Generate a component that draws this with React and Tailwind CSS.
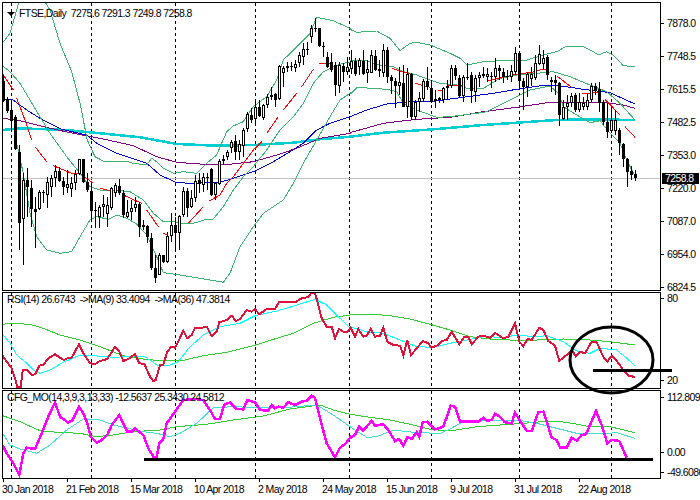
const FONT = { fontFamily: '"Liberation Sans", Arial, sans-serif' };

// All series are read off the reference at 3x scale: [x, y, x, y, ...]; R marks the right half (x + 1050).
const pair = (a, b = []) => {
  const out = [];
  for (let i = 0; i < a.length; i += 2) out.push([a[i], a[i + 1]]);
  for (let i = 0; i < b.length; i += 2) out.push([b[i] + 1050, b[i + 1]]);
  return out;
};
const main = (a, b) => pair(a, b).map(([x, y]) => `${(x / 3).toFixed(1)},${(y / 3).toFixed(1)}`).join(' ');
const sub = (a, b) => pair(a, b).map(([x, y]) => `${(x / 3).toFixed(1)},${(285 + y / 3).toFixed(1)}`).join(' ');

// top, bottom, high, low, white?
const CANDLES = [
  [243,303,225,305,0],[298,332,290,340,0],[330,362,305,395,0],[350,447,345,450,0],[457,670,435,750,0],[540,658,520,795,1],[540,560,505,650,0],[565,628,540,680,0],[628,635,590,745,0],[577,628,570,630,1],
  [577,580,570,610,1],[545,585,530,625,1],[535,562,525,590,1],[512,535,495,560,1],[513,542,500,545,0],[542,562,530,585,0],[553,563,510,580,1],[550,567,530,592,1],[522,550,510,570,1],[478,522,478,525,1],
  [478,545,478,548,0],[545,570,520,575,0],[572,632,555,662,0],[630,633,605,685,0],[622,652,615,685,1],[613,620,585,650,1],[615,642,590,680,1],[565,625,560,630,1],[555,578,550,590,1],[557,580,537,585,0],
  [580,645,570,655,0],[637,650,600,655,1],[625,635,600,660,1],[612,625,590,635,1],[612,680,605,712,0],[675,682,660,690,1],[678,712,675,730,0],[715,803,700,810,0],[803,835,765,850,0],[765,825,760,825,1],
  [765,785,765,790,0],[708,785,695,790,1],[675,708,640,725,1],[675,700,650,750,0],[648,700,645,750,1],[572,645,560,650,1],[572,625,565,650,0],[595,622,570,625,1],[542,595,525,605,1],[540,552,520,580,0],
  [532,555,520,575,1],[532,535,518,570,1],[508,585,505,588,0],[550,585,545,600,1],[483,552,478,555,1],[478,482,465,495,0],[457,472,450,480,1],[427,443,420,460,1],[423,455,405,480,0],[432,455,420,480,1],
  [390,438,385,470,1],[342,388,335,395,1],[345,360,325,370,0],[322,358,305,375,1],[322,348,300,350,0],[316,353,312,360,1],[290,316,282,325,1],[284,290,260,300,1],[282,300,278,322,0],[198,298,195,300,1],
  [205,218,198,260,1],[198,204,185,215,1],[198,202,185,212,1],[192,204,180,215,1],[165,190,155,200,1],[147,172,130,195,1],[147,149,125,165,0],[85,112,75,130,1],[85,87,55,95,0],[85,137,85,140,0],
  [137,140,125,172,0],[172,200,155,205,0],[185,210,160,215,0],[195,255,185,288,0],[195,257,185,280,1],[198,215,190,245,0],[202,215,170,225,1],
  [183,207,150,222,1],[183,223,175,228,0],[180,200,175,225,1],[183,222,150,225,0],[207,220,180,250,1],[165,218,150,220,1],[167,210,150,213,0],[207,213,180,232,0],[150,218,132,230,1],[150,232,140,250,0],
  [232,242,225,282,0],[242,257,235,325,0],[247,257,200,285,1],[250,320,195,322,0],[222,322,205,355,1],[222,350,220,360,0],[305,350,300,360,1],[295,307,275,335,1],[243,298,238,305,1],[243,260,200,270,0],
  [265,305,240,310,0],[298,303,270,325,1],[295,300,290,310,1],[265,300,260,310,1],[257,265,240,300,1],[205,257,195,265,1],[205,228,195,240,0],[235,288,225,295,0],[232,287,225,305,1],[230,235,190,240,0],
  [225,272,215,310,0],[235,275,225,305,1],[225,235,215,260,1],[223,228,200,235,1],[222,230,205,245,1],[229,231,215,265,0],[205,230,175,245,1],[203,212,195,240,0],[215,232,205,250,0],[229,231,210,240,0],
  [213,232,195,245,1],[160,215,140,225,1],[160,242,155,268,0],[243,262,235,330,0],[222,260,215,290,1],[222,238,200,258,1],[190,235,165,240,1],[163,192,135,195,1],[175,192,150,210,1],[170,225,165,240,0],
  [240,245,230,275,0],[240,250,225,285,0],[250,345,245,378,0],[320,357,300,360,1],[310,322,285,360,1],[287,310,280,320,1],[285,330,280,335,0],[305,330,280,335,1],[308,322,290,330,1],[300,322,280,330,1],
  [258,300,250,305,1],[258,272,250,285,0],[268,308,245,335,0],[305,365,300,375,0],[367,395,310,415,0],[360,392,320,400,1],[360,392,330,405,1],[390,428,385,465,0],[432,478,430,500,0],[478,515,475,560,0],
  [513,525,498,540,0],[523,535,510,542,0],
];

const GREEN = '#3cb371';
const MAIN_LINES = [
  { c: '#00ced1', w: 2.5, p: main([8,390,60,385,200,390,300,400,420,412,530,432,650,437,760,435,880,428,960,418,1050,410], [100,398,250,388,400,375,500,368,620,360,720,358,855,360]) },
  { c: '#800080', w: 1, p: main([8,355,60,362,130,380,210,398,300,415,400,437,470,470,530,487,600,492,670,495,760,485,830,465,890,445,960,415,1050,400], [0,398,100,370,200,358,300,352,400,335,500,322,600,307,760,307,820,315,855,325]) },
  { c: '#0000cd', w: 1, p: main([8,298,40,300,80,330,120,355,185,388,260,405,290,430,350,460,440,490,480,525,530,548,580,550,660,547,700,535,760,515,820,485,870,455,910,430,950,390,990,370,1050,350], [0,350,50,330,110,312,180,305,240,305,330,293,430,280,500,268,580,256,620,256,700,268,780,278,855,312]) },
  { c: GREEN, w: 1, p: main([8,128,30,100,50,30,60,-10]) },
  { c: GREEN, w: 1, p: main([125,-10,150,30,180,130,215,215,240,310,262,420,285,470,310,483,375,483,400,490,440,495,455,475,470,485,490,505,520,520,550,515,590,520,620,490,650,465,680,395,700,378,730,365,760,320,800,290,830,240,850,180,890,140,930,100,950,52,1000,62,1050,85], [0,88,20,97,80,93,120,115,150,152,180,130,200,127,240,135,300,160,330,175,350,195,400,185,490,180,530,180,590,162,620,155,650,138,700,140,730,155,745,165,770,155,790,165,820,197,855,200]) },
  { c: GREEN, w: 1, p: main([8,198,30,215,60,250,90,300,120,350,150,400,200,470,240,520,270,560,300,570,340,570,390,575,430,600,460,640,490,665,520,665,550,672,580,670,620,658,640,657,670,620,700,570,730,530,760,500,800,450,840,390,880,350,910,310,940,250,970,215,1000,200,1030,190,1050,187], [0,183,40,180,90,195,130,200,160,215,200,225,240,240,270,250,320,255,350,265,400,265,450,235,500,225,560,220,610,215,660,230,720,255,770,275,810,310,855,360]) },
  { c: GREEN, w: 1, p: main([50,430,70,520,90,640,110,710,140,750,180,760,215,755,240,710,270,660,290,650,325,658,350,645,380,655,410,672,440,705,470,770,490,818,540,825,600,835,670,847,690,820,720,740,760,680,790,640,850,600,880,550,910,490,950,420,990,350,1020,300,1050,280], [0,283,20,263,80,265,120,270,140,275,160,310,200,330,260,352,300,350,380,340,410,335,440,320,490,295,540,270,600,258,625,280,640,320,680,345,720,368,750,362,780,400,810,430,830,480,856,530]) },
  ...[
    [8,222,40,270],[50,295,75,360,95,420],[105,440,140,485],[160,497,215,520,240,520,280,550],[300,565,340,575],[370,585,425,610],[440,630,475,680],[490,700,505,705],
    [565,670,610,620],[628,603,660,585,680,550,700,530,760,450,785,425],[800,400,835,350],[850,330,890,280],[905,260,940,208],[958,190,990,190,1000,195],
  ].map((s) => ({ c: '#ff0000', w: 1, p: main(s) })),
  ...[
    [125,205,180,222],[195,250,240,262],[265,270,275,272],[295,258,345,255],[410,243,490,225,555,215,575,208,590,210],[620,228,665,262],[695,280,745,278],[765,298,810,345],[825,380,855,412],
  ].map((s) => ({ c: '#ff0000', w: 1, p: main([], s) })),
];

const RSI_LINES = [
  { c: '#32cd32', w: 1, p: sub([8,118,30,115,90,118,130,130,180,150,240,165,300,185,370,212,430,222,490,228,550,226,610,212,680,202,760,182,830,160,880,145,940,115,1000,97,1050,90], [0,88,70,88,120,92,180,102,240,118,300,135,360,155,420,162,480,165,560,165,640,162,720,165,780,170,855,180]) },
  { c: '#00ffff', w: 1, p: sub([8,148,30,175,50,210,80,235,100,255,120,265,150,255,190,232,240,210,290,213,340,217,430,213,450,225,470,240,510,240,535,230,570,185,610,150,660,125,720,115,765,92,830,78,885,62,945,43,980,60,1020,100,1050,128], [0,125,50,140,100,145,150,165,200,185,250,187,300,175,350,165,400,155,460,157,500,150,550,155,590,152,640,170,680,198,720,205,750,190,800,195,830,220,855,242]) },
  { c: '#dc143c', w: 2, p: sub([8,212,20,230,35,250,45,280,52,305,62,305,68,255,82,255,95,270,105,268,118,242,130,240,145,220,165,208,180,218,192,225,205,218,215,218,237,177,250,205,270,235,285,237,300,228,322,222,345,185,358,200,370,228,385,222,405,207,418,235,433,237,450,275,460,288,467,285,480,240,490,240,502,200,514,185,526,188,550,137,562,160,575,150,585,128,605,128,620,125,635,153,650,140,658,112,680,105,695,92,707,108,720,102,740,75,755,80,765,72,778,88,800,72,825,72,838,50,885,52,905,40,925,36,935,22,945,25,955,60,965,100,980,125,995,125,1005,160,1017,132,1030,140,1042,140,1050,130], [0,125,15,155,25,132,40,155,50,152,62,132,75,155,90,152,100,128,112,170,130,180,150,182,160,212,172,165,183,210,200,190,218,168,235,175,245,188,265,180,275,168,290,165,305,140,328,178,343,155,355,155,365,178,385,155,400,152,420,158,435,143,460,160,475,155,495,115,508,170,520,183,533,162,545,165,568,128,580,135,595,168,615,182,628,228,650,210,665,195,677,213,690,200,705,205,725,170,740,172,760,215,772,230,785,213,800,228,825,262,835,272,855,276]) },
];

const CFG_LINES = [
  { c: '#32cd32', w: 1, p: sub([8,392,60,410,120,437,170,442,240,445,290,455,340,450,400,440,480,435,530,425,620,418,700,405,790,393,870,372,960,360,1000,375,1050,388], [0,388,60,397,120,405,180,418,240,433,300,438,380,425,450,420,520,415,600,408,650,412,720,425,780,425,855,443]) },
  { c: '#40e0d0', w: 1, p: sub([8,445,30,480,60,492,110,505,150,480,200,435,250,402,295,403,340,420,430,440,470,445,510,455,540,445,590,415,640,368,700,365,780,368,850,368,950,360,1000,390,1050,425], [0,425,50,457,80,455,130,435,200,443,270,445,300,432,340,410,420,405,500,405,560,415,620,430,680,445,740,447,800,443,855,460]) },
  { c: '#ff00ff', w: 2.5, p: sub([8,482,20,505,40,535,58,570,70,505,80,488,105,492,125,445,145,395,165,352,180,395,205,413,218,405,237,365,250,385,262,415,272,455,290,473,305,465,322,450,335,420,358,390,372,420,382,440,395,440,405,430,430,450,445,490,462,518,470,515,478,475,490,462,500,415,525,380,550,345,585,342,610,345,630,375,645,402,660,402,672,360,690,352,710,372,730,373,742,345,765,352,780,375,805,377,815,360,825,370,835,365,850,368,865,352,885,360,905,350,920,347,935,332,945,338,960,400,980,475,1005,517,1020,488,1035,478,1050,458], [0,460,15,450,27,425,40,437,65,407,75,422,100,418,115,435,135,468,148,462,160,483,172,457,185,462,200,442,208,455,218,412,232,410,255,433,280,425,302,362,315,365,330,410,360,410,385,410,400,398,410,407,425,405,435,387,450,395,465,412,485,415,495,383,515,415,530,438,545,438,565,382,580,380,595,425,605,458,620,465,630,488,650,488,665,458,680,467,695,450,708,448,738,378,755,420,772,475,785,465,808,468,830,518]) },
];

const DASHES = [11, 91, 175, 255, 349, 431, 519, 611];

function Lines({ lines }) {
  return lines.map((l, i) => (
    <polyline key={i} points={l.p} fill="none" stroke={l.c} strokeWidth={l.w} shapeRendering="crispEdges" />
  ));
}

function PanelChart({ top, height, children }) {
  return (
    <svg viewBox={`3 ${top} 657 ${height}`} className="block w-full h-full">
      {DASHES.map((x) => (
        <line key={x} x1={x + 0.5} x2={x + 0.5} y1={top} y2={top + height} stroke="#000" strokeDasharray="3 3" shapeRendering="crispEdges" />
      ))}
      {children}
    </svg>
  );
}

function Tick({ children }) {
  return (
    <div className="flex items-center h-[11px] leading-[11px]">
      <span className="w-[3px] h-px bg-black shrink-0" />
      <span className="ml-[3px]">{children}</span>
    </div>
  );
}

const PRICES = ['7878.0', '7748.5', '7615.5', '7482.5', '7353.0', '7220.0', '7087.0', '6954.0', '6824.5'];
const DATES = ['30 Jan 2018', '21 Feb 2018', '15 Mar 2018', '10 Apr 2018', '2 May 2018', '24 May 2018', '15 Jun 2018', '9 Jul 2018', '31 Jul 2018', '22 Aug 2018'];

export default function App() {
  return (
    <div className="relative w-[700px] h-[500px] bg-white overflow-hidden pt-[2px] pl-[2px] text-black text-[10.5px] tracking-[-0.6px]" style={FONT}>
      {/* price panel */}
      <div className="flex h-[289px]">
        <div className="relative w-[659px] border border-black shrink-0">
          <PanelChart top={3} height={287}>
            <line x1="3" x2="660" y1="178.5" y2="178.5" stroke="#c0c0c0" shapeRendering="crispEdges" />
            <Lines lines={MAIN_LINES} />
            {CANDLES.map(([t, b, h, l, w], i) => {
              const x = 3 + 4 * i;
              const T = Math.round(t / 3), B = Math.round(b / 3), H = Math.round(h / 3), L = Math.round(l / 3);
              return (
                <g key={i} shapeRendering="crispEdges">
                  <rect x={x} y={H} width="1" height={Math.max(L - H, 1)} fill="#000" />
                  <rect x={x - 1} y={T} width="3" height={Math.max(B - T, 1)} fill="#000" />
                  {w && B - T > 2 ? <rect x={x} y={T + 1} width="1" height={B - T - 2} fill="#fff" /> : null}
                </g>
              );
            })}
          </PanelChart>
          <div className="absolute left-[4px] top-[5px] flex items-center h-[11px] whitespace-pre">
            <span className="w-0 h-0 border-x-[4px] border-x-transparent border-t-[4px] border-t-black mr-[4px]" />
            <span>FTSE,Daily  7275.6 7291.3 7249.8 7258.8</span>
          </div>
        </div>
        <div className="flex flex-col gap-[22px] pt-[16px]">
          {PRICES.map((p) => <Tick key={p}>{p}</Tick>)}
        </div>
      </div>

      {/* RSI panel */}
      <div className="flex h-[97px] mt-px">
        <div className="relative w-[659px] border border-black shrink-0">
          <PanelChart top={293} height={95}>
            <Lines lines={RSI_LINES} />
          </PanelChart>
          <div className="absolute left-[4px] top-[1px] h-[11px] leading-[11px] whitespace-pre">RSI(14) 26.6743  -&gt;MA(9) 33.4094  -&gt;MA(36) 47.3814</div>
        </div>
        <div className="flex flex-col gap-[71px] pt-[1px]">
          <Tick>80</Tick>
          <Tick>20</Tick>
        </div>
      </div>

      {/* momentum panel */}
      <div className="flex h-[89px] mt-px">
        <div className="relative w-[659px] border border-black shrink-0">
          <PanelChart top={391} height={87}>
            <Lines lines={CFG_LINES} />
          </PanelChart>
          <div className="absolute left-[4px] top-[1px] h-[11px] leading-[11px] whitespace-pre">CFG_MO(14,3,9,3,13,33) -12.5637 25.3430 24.5812</div>
        </div>
        <div className="flex flex-col pt-[2px]">
          <Tick>112.8098</Tick>
          <div className="mt-[44px]"><Tick>0.00</Tick></div>
          <div className="mt-[9px]"><Tick>-49.6086</Tick></div>
        </div>
      </div>

      {/* time axis */}
      <div className="flex">
        {DATES.map((d) => (
          <div key={d} className="w-[64px] shrink-0 pl-px">
            <div className="w-px h-[3px] bg-black" />
            <div className="-ml-px mt-[2px] h-[11px] leading-[11px] whitespace-nowrap">{d}</div>
          </div>
        ))}
      </div>

      {/* current price tag */}
      <div className="absolute left-[662px] top-[173px] w-[37px] h-[11px] leading-[11px] bg-black text-white pl-[3px]">7258.8</div>

      {/* hand-drawn annotations */}
      <svg viewBox="0 0 700 500" className="absolute left-0 top-0 w-[700px] h-[500px] pointer-events-none">
        <ellipse cx="611.5" cy="360" rx="41.5" ry="33" fill="none" stroke="#000" strokeWidth="3" />
        <rect x="593" y="369" width="79" height="3" fill="#000" shapeRendering="crispEdges" />
        <rect x="144" y="458" width="509" height="3" fill="#000" shapeRendering="crispEdges" />
      </svg>
    </div>
  );
}
